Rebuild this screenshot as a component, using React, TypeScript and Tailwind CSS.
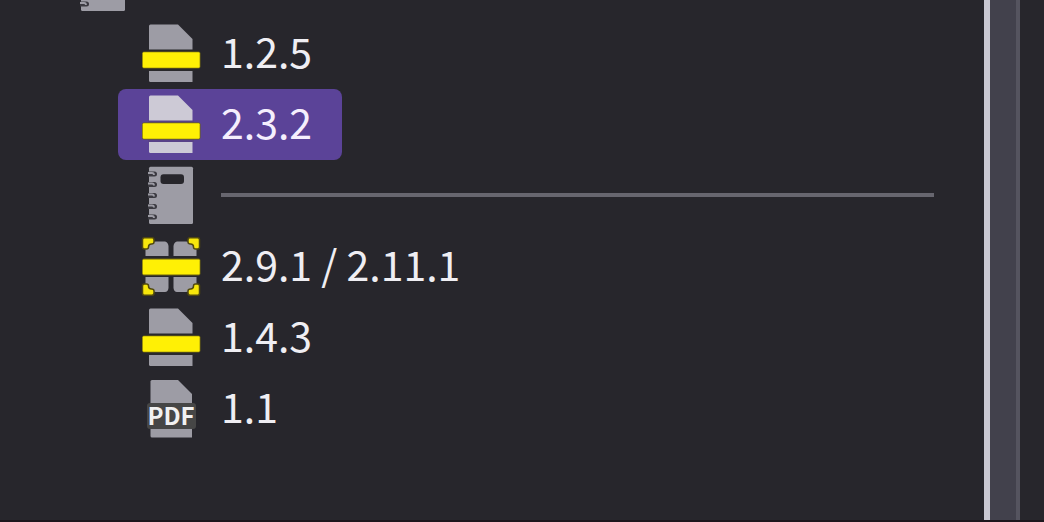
import type { ReactNode } from 'react';

type IconProps = { kind: 'page' | 'notebook' | 'combined' | 'pdf'; active?: boolean };

function Icon({ kind, active = false }: IconProps) {
  const paper = active ? '#cdcad6' : '#9d9ca5';
  const gap = active ? '#594288' : '#29282b';
  return (
    <svg width="60" height="59" viewBox="0 0 60 59" className="shrink-0" aria-hidden="true">
      {kind === 'page' && (
        <>
          <path d="M9.5 .5H37L51.5 15V58H9.5Q8 58 8 56.5V2Q8 .5 9.5 .5Z" fill={paper} />
          <path d="M7 25.5H53V47H7Z" fill={gap} />
          <rect x="1" y="27.5" width="58.5" height="17" rx="2" fill="#6f6510" />
          <rect x="1.7" y="28.2" width="57" height="15.5" rx="1.2" fill="#fff005" />
        </>
      )}
      {kind === 'notebook' && (
        <>
          <path d="M9.5 .7H50.5Q52 .7 52 2.2V56.5Q52 58 50.5 58H9.5Q8 58 8 56.5V2.2Q8 .7 9.5 .7Z" fill={paper} />
          <rect x="19.5" y="8.2" width="23.5" height="9.8" rx="3" fill="#27262b" />
          {[8, 18.5, 29.5, 40.5, 51].map((y) => (
            <g key={y}>
              <path d={`M7 ${y - 2.5}H13.5Q16 ${y - 2.5} 16 ${y}T13.5 ${y + 2.5}H7Z`} fill="#3b3a41" />
              <path d={`M7 ${y - 1}H11Q13 ${y - 1} 13 ${y + 1}`} fill="none" stroke="#9d9ca5" strokeWidth="1.8" />
            </g>
          ))}
        </>
      )}
      {kind === 'combined' && (
        <>
          <path d="M4.5 19V12Q8 4.5 15 4.5H24Q27 5 27.5 9V19ZM32.5 19V9Q33 5 36 4.5H45Q52 4.5 55.5 12V19ZM4.5 40H27.5V51Q27 55 24 55H15Q8 55 4.5 48ZM32.5 40H55.5V48Q52 55 45 55H36Q33 55 32.5 51Z" fill={paper} />
          <g fill="#f7e60c" stroke="#51490f" strokeWidth="1.5" strokeLinejoin="round">
            <path d="M3.5 .8H11Q13 .8 13 3V5Q13 7 10.5 7Q7.5 7 7.5 10Q7.5 12 5.5 12H3.5Q1.5 12 1.5 10V2.8Q1.5 .8 3.5 .8Z" />
            <path d="M56.5 .8H49Q47 .8 47 3V5Q47 7 49.5 7Q52.5 7 52.5 10Q52.5 12 54.5 12H56.5Q58.5 12 58.5 10V2.8Q58.5 .8 56.5 .8Z" />
            <path d="M3.5 58.2H11Q13 58.2 13 56V54Q13 52 10.5 52Q7.5 52 7.5 49Q7.5 47 5.5 47H3.5Q1.5 47 1.5 49V56.2Q1.5 58.2 3.5 58.2Z" />
            <path d="M56.5 58.2H49Q47 58.2 47 56V54Q47 52 49.5 52Q52.5 52 52.5 49Q52.5 47 54.5 47H56.5Q58.5 47 58.5 49V56.2Q58.5 58.2 56.5 58.2Z" />
          </g>
          <rect x="1" y="21.5" width="58.5" height="17" rx="2" fill="#6f6510" />
          <rect x="1.7" y="22.5" width="57" height="15" rx="1" fill="#fff005" />
        </>
      )}
      {kind === 'pdf' && (
        <>
          <path d="M11 1H37L51 15V58.5H11Q9.5 58.5 9.5 57V2.5Q9.5 1 11 1Z" fill={paper} />
          <rect x="6" y="24" width="49" height="26" rx="3" fill="#464646" />
          <text x="30" y="46" textAnchor="middle" fill="#f1f1f1" className="font-['Noto_Sans_CJK_SC','Noto_Sans',sans-serif] text-[24px] font-bold">
            PDF
          </text>
        </>
      )}
    </svg>
  );
}

function Item({ kind, active = false, children }: IconProps & { children: ReactNode }) {
  return (
    <li className="flex">
      <button
        type="button"
        aria-pressed={active}
        className={
          active
            ? 'flex h-[71px] items-center gap-5 rounded-lg bg-[#5b4398] pr-[30px] pl-[23px] text-[#f5effd]'
            : 'flex h-[71px] items-center gap-5 rounded-lg pr-[30px] pl-[23px] text-[#efeef3]'
        }
      >
        <Icon kind={kind} active={active} />
        <span className="pb-2 whitespace-nowrap">{children}</span>
      </button>
    </li>
  );
}

export default function App() {
  return (
    <div className="flex h-screen overflow-hidden border-b-2 border-[#1d171d] bg-[#27262c] font-['Noto_Sans_CJK_SC','Noto_Sans',sans-serif] text-[41px] leading-[48px]">
      <main className="min-w-0 flex-1 pr-[50px]">
        <ul className="-mt-[53px] pl-[73px]">
          <li>
            <div className="flex h-[71px] items-center">
              <Icon kind="notebook" />
            </div>
            <ul className="pl-[45px]">
              <Item kind="page">1.2.5</Item>
              <Item kind="page" active>2.3.2</Item>
              <li className="flex h-[71px] items-center gap-5 pl-[23px]">
                <Icon kind="notebook" />
                <hr className="mb-0.5 flex-1 border-0 border-t-4 border-[#67666f]" />
              </li>
              <Item kind="combined">2.9.1 / 2.11.1</Item>
              <Item kind="page">1.4.3</Item>
              <Item kind="pdf">1.1</Item>
            </ul>
          </li>
        </ul>
      </main>
      <aside className="w-9 border-r-4 border-l-6 border-r-[#55545f] border-l-[#c9c8d2] bg-[#42414c]" />
      <div className="w-6 bg-[#27262c]" />
    </div>
  );
}
